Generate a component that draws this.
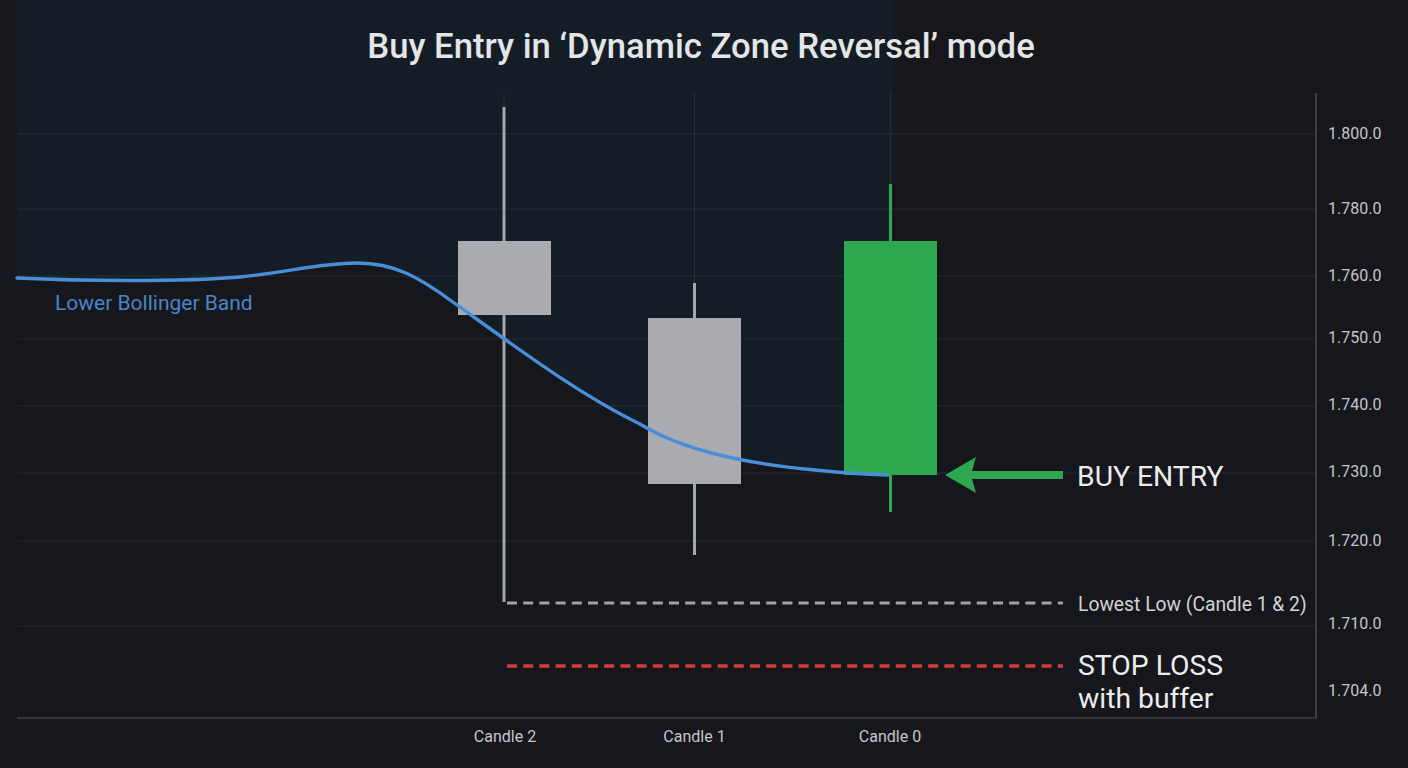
import React from "react";

const gridYs = [134, 209, 276, 339, 406, 473, 541, 626];
const axisLabels: [string, number][] = [
  ["1.800.0", 139],
  ["1.780.0", 214],
  ["1.760.0", 281],
  ["1.750.0", 343],
  ["1.740.0", 410],
  ["1.730.0", 477],
  ["1.720.0", 546],
  ["1.710.0", 629],
  ["1.704.0", 696],
];

const bandPath =
  "M17,278 C80,281 180,282 240,277 C290,272 320,263 357,263 C395,263 420,278 450,300 C520,350 580,395 640,424 C690,455 770,470 888,475";
const shadePath =
  "M17,0 H893 V475 H888 C770,470 690,455 640,424 C580,395 520,350 450,300 C420,278 395,263 357,263 C320,263 290,272 240,277 C180,282 80,281 17,278 Z";

function Chart() {
  return (
    <svg width={1408} height={768} viewBox="0 0 1408 768" className="block">
      {/* shaded zone above the band */}
      <path d={shadePath} fill="#141c25" />

      {/* grid */}
      {gridYs.map((y) => (
        <line key={y} x1={17} x2={1316} y1={y} y2={y} stroke="#ffffff" strokeOpacity={0.07} strokeWidth={1} />
      ))}

      {/* candle guide lines */}
      <line x1={504} x2={504} y1={93} y2={107} stroke="#ffffff" strokeOpacity={0.08} />
      <line x1={694.5} x2={694.5} y1={93} y2={283} stroke="#ffffff" strokeOpacity={0.08} />
      <line x1={890.5} x2={890.5} y1={93} y2={184} stroke="#ffffff" strokeOpacity={0.08} />

      {/* axes */}
      <line x1={1316} x2={1316} y1={93} y2={718} stroke="#4a4c51" strokeWidth={1.5} />
      <line x1={17} x2={1316} y1={718} y2={718} stroke="#3f4146" strokeWidth={1.5} />

      {/* candle 2 */}
      <rect x={502.5} y={107} width={3} height={495} fill="#a3a6ab" />
      <rect x={458} y={241} width={93} height={74} fill="#a9abb0" />
      {/* candle 1 */}
      <rect x={693} y={283} width={3} height={272} fill="#a3a6ab" />
      <rect x={648} y={318} width={93} height={166} fill="#a9abb0" />
      {/* candle 0 */}
      <rect x={889} y={184} width={3} height={328} fill="#2ea84f" />
      <rect x={844} y={241} width={93} height={234} fill="#2ea84f" />

      {/* band */}
      <path d={bandPath} fill="none" stroke="#4a8ed8" strokeWidth={3.4} strokeLinecap="round" />

      {/* arrow */}
      <polygon
        points="945,475 976,457 972,471 1063,471 1063,479 972,479 976,493"
        fill="#2ea84f"
      />

      {/* dashed levels */}
      <line x1={507} x2={1063} y1={603} y2={603} stroke="#a0a2a6" strokeWidth={3} strokeDasharray="10 6.2" />
      <line x1={507} x2={1063} y1={666} y2={666} stroke="#d43b3b" strokeWidth={3.5} strokeDasharray="10 6.2" />

      {/* texts */}
      <text x={55} y={310} fontSize={21} fill="#4a85c9">
        Lower Bollinger Band
      </text>
      <text x={1077} y={486} fontSize={28.3} fill="#ececec">
        BUY ENTRY
      </text>
      <text x={1078} y={611} fontSize={19.3} fill="#d2d3d5">
        Lowest Low (Candle 1 &amp; 2)
      </text>
      <text x={1078} y={675} fontSize={28.3} fill="#ececec">
        STOP LOSS
      </text>
      <text x={1078} y={708} fontSize={28.3} fill="#ececec">
        with buffer
      </text>

      {axisLabels.map(([t, y]) => (
        <text key={t} x={1328} y={y} fontSize={16} fill="#c4c6c9">
          {t}
        </text>
      ))}

      <text x={505} y={742} fontSize={16} fill="#c4c6c9" textAnchor="middle">
        Candle 2
      </text>
      <text x={694.5} y={742} fontSize={16} fill="#c4c6c9" textAnchor="middle">
        Candle 1
      </text>
      <text x={890} y={742} fontSize={16} fill="#c4c6c9" textAnchor="middle">
        Candle 0
      </text>
    </svg>
  );
}

export default function App() {
  return (
    <div className="relative w-[1408px] h-[768px] overflow-hidden bg-[#16171c] font-['Roboto','Liberation_Sans',sans-serif]">
      <Chart />
      <h1 className="absolute left-0 right-0 top-[29px] text-center text-[34.7px] leading-none font-medium text-[#e4e5e7] pr-[6px]">
        Buy Entry in ‘Dynamic Zone Reversal’ mode
      </h1>
    </div>
  );
}
